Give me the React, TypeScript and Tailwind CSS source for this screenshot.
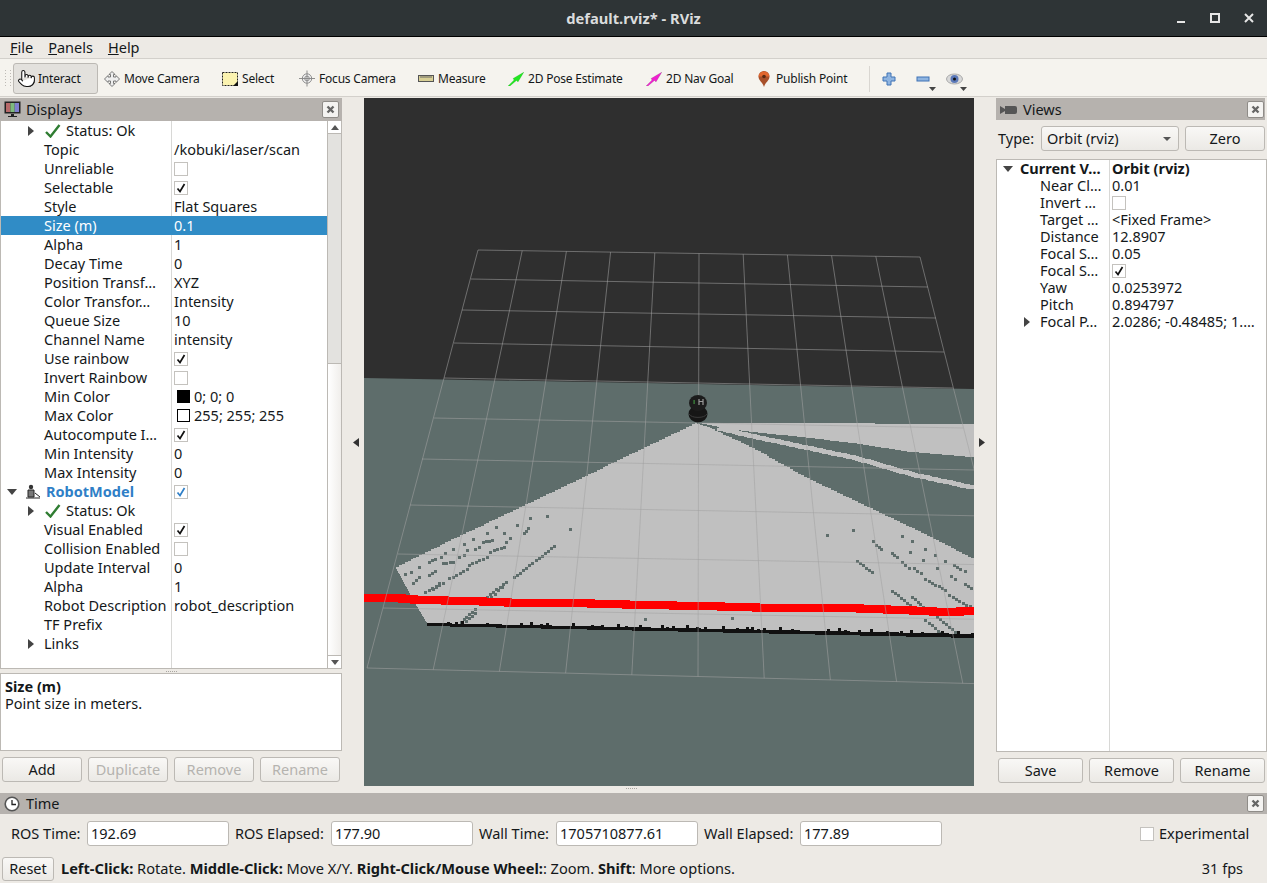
import React from "react";
import { Pointer } from "lucide-react";

const caretRight = (
  <svg width="6" height="10" viewBox="0 0 6 10">
    <path d="M0 0 L6 5 L0 10 Z" fill="#444" />
  </svg>
);
const caretDown = (
  <svg width="10" height="6" viewBox="0 0 10 6">
    <path d="M0 0 L10 0 L5 6 Z" fill="#444" />
  </svg>
);

const GreenCheck = () => (
  <svg width="16" height="14" viewBox="0 0 16 14">
    <path d="M1 8 L5.5 12.5 L14.5 1" fill="none" stroke="#2f7d32" strokeWidth="2.4" />
  </svg>
);

const Check = ({ on, blue }: { on?: boolean; blue?: boolean }) => (
  <span className="flex h-[14px] w-[14px] items-center justify-center border border-[#c4c2be] bg-white">
    {on && (
      <svg width="10" height="10" viewBox="0 0 10 10">
        <path d="M1.5 5.5 L4 8.5 L8.5 1" fill="none" stroke={blue ? "#2f7fc7" : "#111"} strokeWidth="1.7" />
      </svg>
    )}
  </span>
);

const CloseBtn = () => (
  <span className="flex h-[17px] w-[17px] items-center justify-center rounded-[2px] border border-[#8f8c88] bg-[#f4f3f1]">
    <svg width="9" height="9" viewBox="0 0 9 9">
      <path d="M1.5 1.5 L7.5 7.5 M7.5 1.5 L1.5 7.5" stroke="#666" strokeWidth="2.4" />
    </svg>
  </span>
);

const Btn = ({ children, disabled, className }: { children: React.ReactNode; disabled?: boolean; className: string }) => (
  <button
    className={`flex items-center justify-center rounded-[3px] border border-[#bcb9b4] bg-gradient-to-b from-[#f9f8f6] to-[#ebe9e5] ${
      disabled ? "text-[#b5b3af]" : "text-[#14181a]"
    } ${className}`}
  >
    {children}
  </button>
);

type Row = {
  name: React.ReactNode;
  value?: React.ReactNode;
  caret?: boolean;
  ok?: boolean;
};

const ROS_ROWS: Row[] = [
  { name: "Status: Ok", caret: true, ok: true },
  { name: "Topic", value: "/kobuki/laser/scan" },
  { name: "Unreliable", value: <Check /> },
  { name: "Selectable", value: <Check on /> },
  { name: "Style", value: "Flat Squares" },
];
const AFTER_ROWS: Row[] = [
  { name: "Alpha", value: "1" },
  { name: "Decay Time", value: "0" },
  { name: "Position Transf…", value: "XYZ" },
  { name: "Color Transfor…", value: "Intensity" },
  { name: "Queue Size", value: "10" },
  { name: "Channel Name", value: "intensity" },
  { name: "Use rainbow", value: <Check on /> },
  { name: "Invert Rainbow", value: <Check /> },
  {
    name: "Min Color",
    value: (
      <span className="flex items-center gap-[4px] pl-[3px]">
        <span className="h-[13px] w-[13px] bg-black" />
        0; 0; 0
      </span>
    ),
  },
  {
    name: "Max Color",
    value: (
      <span className="flex items-center gap-[4px] pl-[3px]">
        <span className="h-[13px] w-[13px] border border-black bg-white" />
        255; 255; 255
      </span>
    ),
  },
  { name: "Autocompute I…", value: <Check on /> },
  { name: "Min Intensity", value: "0" },
  { name: "Max Intensity", value: "0" },
];
const ROBOT_ROWS: Row[] = [
  { name: "Status: Ok", caret: true, ok: true },
  { name: "Visual Enabled", value: <Check on /> },
  { name: "Collision Enabled", value: <Check /> },
  { name: "Update Interval", value: "0" },
  { name: "Alpha", value: "1" },
  { name: "Robot Description", value: "robot_description" },
  { name: "TF Prefix" },
  { name: "Links", caret: true },
];

const DisplayRow = ({ row }: { row: Row }) => (
  <div className="flex h-[19px] items-center">
    <div className="flex h-full w-[171px] items-center whitespace-nowrap border-r border-[#d8d8d6]">
      <span className="flex w-[33px] justify-end pr-[0px]">{row.caret && caretRight}</span>
      <span className={row.ok ? "ml-[11px] flex items-center gap-[5px]" : "ml-[10px]"}>
        {row.ok && <GreenCheck />}
        {row.name}
      </span>
    </div>
    <div className="whitespace-nowrap pl-[2px]">{row.value}</div>
  </div>
);

const VIEW_ROWS: [string, React.ReactNode, boolean?][] = [
  ["Near Cl…", "0.01"],
  ["Invert …", <Check />],
  ["Target …", "<Fixed Frame>"],
  ["Distance", "12.8907"],
  ["Focal S…", "0.05"],
  ["Focal S…", <Check on />],
  ["Yaw", "0.0253972"],
  ["Pitch", "0.894797"],
  ["Focal P…", "2.0286; -0.48485; 1.…", true],
];

const TB_ITEMS = [
  { label: "Move Camera", width: "w-[118px]", slot: "mr-[4px] w-[16px]", icon: <MoveIcon /> },
  { label: "Select", width: "w-[77px]", slot: "mr-[4px] w-[16px]", icon: <SelectIcon /> },
  { label: "Focus Camera", width: "w-[119px]", slot: "mr-[4px] w-[16px]", icon: <FocusIcon /> },
  { label: "Measure", width: "w-[90px]", slot: "mr-[4px] w-[16px]", icon: <RulerIcon /> },
  { label: "2D Pose Estimate", width: "w-[138px]", slot: "mr-[4px] w-[16px]", icon: <ArrowIcon color="#22e622" /> },
  { label: "2D Nav Goal", width: "w-[112px]", slot: "mr-[4px] w-[16px]", icon: <ArrowIcon color="#f01fd0" /> },
  { label: "Publish Point", width: "w-[111px]", slot: "mr-[6px] w-[12px]", icon: <PinIcon /> },
];

function MoveIcon() {
  return (
    <svg width="16" height="16" viewBox="0 0 16 16" fill="#eee" stroke="#777" strokeWidth="1">
      <path d="M8 .5 L11 3.5 H9.5 V6 H12 V4.5 L15.5 8 L12 11.5 V10 H9.5 V12.5 H11 L8 15.5 L5 12.5 H6.5 V10 H4 V11.5 L.5 8 L4 4.5 V6 H6.5 V3.5 H5 Z" />
    </svg>
  );
}
function SelectIcon() {
  return (
    <svg width="16" height="16" viewBox="0 0 16 16">
      <rect x="0.5" y="1.5" width="15" height="13" fill="#fbf3b0" stroke="#222" strokeDasharray="2 1" />
      <path d="M11 15 L16 15 L16 10 Z" fill="#111" />
    </svg>
  );
}
function FocusIcon() {
  return (
    <svg width="17" height="17" viewBox="0 0 17 17" fill="none" stroke="#888">
      <circle cx="8.5" cy="8.5" r="5" fill="#eee" />
      <circle cx="8.5" cy="8.5" r="2.5" />
      <path d="M8.5 0 V17 M0 8.5 H17" />
    </svg>
  );
}
function RulerIcon() {
  return (
    <svg width="16" height="8" viewBox="0 0 16 8">
      <rect x="0.5" y="0.5" width="15" height="6" fill="#d8cf95" stroke="#555" />
      <path d="M3 1 V3 M5 1 V3 M7 1 V3 M9 1 V3 M11 1 V3 M13 1 V3" stroke="#666" />
    </svg>
  );
}
function ArrowIcon({ color }: { color: string }) {
  return (
    <svg width="16" height="14" viewBox="0 0 16 14">
      <path d="M0 14 L6 8 L5 6.5 L16 0 L10 10 L8.5 8.5 L2 14 Z" fill={color} stroke="#1a6a1a" strokeOpacity="0.25" strokeWidth="0.5" />
    </svg>
  );
}
function PinIcon() {
  return (
    <svg width="12" height="16" viewBox="0 0 12 16">
      <path d="M6 16 C4.5 11 .5 9.5 .5 5.5 A5.5 5.5 0 0 1 11.5 5.5 C11.5 9.5 7.5 11 6 16 Z" fill="#a8502a" />
      <path d="M6 .5 A5.5 5.5 0 0 1 11.5 5.5 L.5 5.5 A5.5 5.5 0 0 1 6 .5 Z" fill="#e2672e" />
      <circle cx="6" cy="5.5" r="1.8" fill="#5a2a12" />
    </svg>
  );
}

// grid corners read off the picture, one entry per horizontal line
const GRID_L = [[478, 250], [471, 279], [462, 310], [454, 343], [444, 378], [434, 418], [422, 459], [410, 505], [398, 554], [383, 608], [367, 668]];
const GRID_R = [[920, 257], [928, 287], [936, 318], [944, 352], [953, 388], [963, 428], [974, 470], [985, 516], [998, 565], [1013, 620], [1029, 685]];

const stairs = (pts: number[][], step = 3) => {
  const out: number[][] = [];
  for (let i = 0; i < pts.length - 1; i++) {
    const [ax, ay] = pts[i];
    const [bx, by] = pts[i + 1];
    const n = Math.max(1, Math.ceil(Math.abs(bx - ax) / step));
    for (let k = 0; k < n; k++) {
      out.push([Math.round(ax + ((bx - ax) * (k + 1)) / n), Math.round(ay + ((by - ay) * k) / n)]);
      out.push([Math.round(ax + ((bx - ax) * (k + 1)) / n), Math.round(ay + ((by - ay) * (k + 1)) / n)]);
    }
  }
  return out;
};
const toPts = (p: number[][]) => p.map((q) => q.join(",")).join(" ");

// crop coordinates of the zoomed map, converted to page pixels
const zx = (x: number) => 360 + x / 2.529;
const zy = (y: number) => 500 + y / 3;

const DOT_RUNS = [
  [390, 232, 490, 138], [320, 290, 370, 245], [332, 290, 358, 262], [255, 365, 290, 328], [268, 362, 292, 340], [165, 275, 210, 250], [185, 268, 200, 250], [225, 235, 270, 208],
  [275, 195, 320, 172], [175, 225, 190, 212], [135, 250, 150, 232], [115, 222, 128, 215], [175, 185, 190, 177],
  [205, 170, 215, 160], [310, 125, 335, 120], [425, 85, 415, 100], [380, 115, 370, 125], [365, 140, 330, 155],
  [290, 148, 300, 142], [250, 170, 262, 165], [210, 190, 235, 185],
  [1305, 135, 1318, 147], [1345, 160, 1358, 170], [1370, 185, 1388, 205], [1400, 205, 1418, 220], [1503, 195, 1518, 208],
  [1495, 228, 1505, 236], [1530, 252, 1545, 265], [1258, 183, 1295, 216], [1430, 238, 1480, 270], [1345, 272, 1390, 315],
  [1395, 290, 1425, 320], [1490, 285, 1550, 325], [1430, 360, 1470, 400], [1460, 350, 1505, 395],
];
const DOTS = [
  [235, 148], [262, 132], [285, 118], [320, 98], [345, 82], [365, 98], [398, 76], [430, 55], [474, 48], [270, 150], [150, 200], [530, 88],
  [1182, 104], [1248, 91], [1297, 123], [1370, 108], [1395, 124], [1428, 148], [1392, 155], [1425, 180], [1453, 165], [1480, 182], [1460, 203], [1530, 213], [720, 358], [942, 355],
];
const TICKS = [220, 240, 255, 318, 405, 430, 455, 470, 535, 585, 610, 650, 670, 705, 760, 775, 790, 825, 850, 870, 915, 950, 975, 990, 1005, 1020, 1060, 1090, 1180, 1210, 1225, 1260, 1290, 1330, 1365, 1390, 1420, 1470, 1510, 1545];

// a run of map cells along a line, about one cell every 4px
const runCells = ([a, b, c, d]: number[]) => {
  const [x1, y1, x2, y2] = [zx(a), zy(b), zx(c), zy(d)];
  const n = Math.max(1, Math.round(Math.hypot(x2 - x1, y2 - y1) / 4));
  return Array.from({ length: n + 1 }, (_, i) => [Math.round(x1 + ((x2 - x1) * i) / n), Math.round(y1 + ((y2 - y1) * i) / n)]);
};

const Scene = () => {
  const map = [
    ...stairs([[698, 423], [510, 513], [457, 538], [396, 568]]),
    [415, 603],
    [427, 623],
    [974, 636],
    [974, 558],
    ...stairs([[974, 558], [933, 537], [870, 507], [807, 477], [755, 448], [712, 428]]),
  ];
  const wedge = [
    [700, 423],
    [775, 423],
    [974, 424],
    [974, 457],
    ...stairs([[974, 457], [913, 452], [854, 443], [803, 437], [755, 432], [724, 428]]),
  ];
  const stripe = stairs([[716, 428], [755, 437], [854, 458], [913, 475], [974, 488]]);
  const red = [
    [364, 598],
    ...stairs(
      [[364, 598], [390, 598], [420, 600], [470, 601], [520, 603], [570, 603], [640, 605], [700, 606], [770, 608], [840, 608], [900, 610], [940, 612], [974, 611]],
      7
    ),
  ];
  return (
    <svg width="610" height="688" viewBox="364 98 610 688" className="block shrink-0">
      <rect x="364" y="98" width="610" height="688" fill="#2f2f2f" />
      <polygon points="364,378 974,389 974,786 364,786" fill="#5e6d6b" />
      <g shapeRendering="crispEdges">
        <polygon points={toPts(map)} fill="#c0c0c0" />
        <polygon points={toPts(wedge)} fill="#c0c0c0" />
        <polyline points={toPts(stripe)} fill="none" stroke="#c0c0c0" strokeWidth="3.5" />
        {DOT_RUNS.flatMap(runCells).map(([x, y], i) => (
          <rect key={i} x={x - 1} y={y - 1} width="3" height="3" fill="#5e6d6b" />
        ))}
        {DOTS.map(([a, b], i) => (
          <rect key={i} x={Math.round(zx(a)) - 1} y={Math.round(zy(b)) - 1} width="3" height="3" fill="#5e6d6b" />
        ))}
        <polygon points="427,623 974,634 974,638 427,626" fill="#111" />
        {TICKS.map((t, i) => (
          <rect key={i} x={Math.round(zx(t))} y={Math.round(623 + (zx(t) - 427) * 0.0201) - 1 - (i % 3)} width="3" height="4" fill="#111" />
        ))}
      </g>
      <polyline points={toPts(red)} fill="none" stroke="#ff0000" strokeWidth="8" shapeRendering="crispEdges" />
      <g stroke="#a3a3a3" strokeOpacity="0.55" strokeWidth="1" fill="none">
        {GRID_L.map((l, i) => (
          <line key={i} x1={l[0]} y1={l[1]} x2={GRID_R[i][0]} y2={GRID_R[i][1]} />
        ))}
        {Array.from({ length: 11 }).map((_, i) => {
          const f = i / 10;
          return (
            <line
              key={i}
              x1={478 + (920 - 478) * f}
              y1={250 + 7 * f}
              x2={367 + (1029 - 367) * f}
              y2={668 + 17 * f}
            />
          );
        })}
      </g>
      <ellipse cx="698" cy="414" rx="9.5" ry="8.5" fill="#161616" />
      <path d="M689 414 A9.5 5 0 0 0 707 414" fill="none" stroke="#3a3a3a" />
      <ellipse cx="698" cy="403" rx="9" ry="8" fill="#1c1c1c" />
      <rect x="693.5" y="400" width="1.2" height="4" fill="#3f8f3f" />
      <path d="M699 399 V405 M703 399 V405 M699 401.5 H703" stroke="#9a9a9a" strokeWidth="1.2" fill="none" />
    </svg>
  );
};

const TimeField = ({ label, value, labelW }: { label: string; value: string; labelW: string }) => (
  <>
    <span className={`${labelW} whitespace-nowrap`}>{label}</span>
    <span className="flex h-[25px] w-[142px] items-center rounded-[3px] border border-[#bcb9b4] bg-white pl-[3px]">{value}</span>
  </>
);

export default function App() {
  return (
    <div className="flex h-[883px] w-[1267px] flex-col overflow-hidden bg-[#edeae5] font-['Noto_Sans',sans-serif] text-[14.5px] leading-none text-[#14181a]">
      {/* title bar */}
      <div className="relative flex h-[37px] shrink-0 items-center justify-center border-b border-black bg-[#2e3436] text-[14.7px] font-bold text-[#dadcdd]">
        default.rviz* - RViz
        <div className="absolute right-[13px] top-0 flex h-full items-center gap-[24px]">
          <svg width="10" height="10" viewBox="0 0 10 10">
            <rect x="1" y="8" width="8" height="2" fill="#e6e6e6" />
          </svg>
          <svg width="10" height="10" viewBox="0 0 10 10">
            <rect x="1" y="1" width="8" height="8" fill="none" stroke="#e6e6e6" strokeWidth="2" />
          </svg>
          <svg width="10" height="10" viewBox="0 0 10 10">
            <path d="M1 1 L9 9 M9 1 L1 9" stroke="#e6e6e6" strokeWidth="2" />
          </svg>
        </div>
      </div>
      {/* menu */}
      <div className="flex h-[21px] shrink-0 items-center gap-[15px] pl-[10px] text-[14.5px]">
        <span><span className="underline">F</span>ile</span>
        <span><span className="underline">P</span>anels</span>
        <span><span className="underline">H</span>elp</span>
      </div>
      {/* toolbar */}
      <div className="flex h-[39px] shrink-0 items-center border-y border-[#d3d0cb] bg-[#f5f3ee] pl-[5px] pt-[2px] text-[12px] tracking-[-0.2px]">
        <span className="grid h-[18px] w-[8px] grid-cols-2 gap-[1px]">
          {Array.from({ length: 12 }).map((_, i) => (
            <span key={i} className="h-[1px] w-[1px] bg-[#bdbab5]" />
          ))}
        </span>
        <div className="flex h-[31px] w-[85px] items-center gap-[2px] rounded-[3px] border border-[#bcb9b4] bg-[#e3e1dd] pl-[3px]">
          <Pointer size={19} strokeWidth={1.3} fill="#fff" color="#111" />
          Interact
        </div>
        {TB_ITEMS.map((it) => (
          <div key={it.label} className={`flex items-center whitespace-nowrap pl-[6px] ${it.width}`}>
            <span className={`flex justify-center ${it.slot}`}>{it.icon}</span>
            {it.label}
          </div>
        ))}
        <span className="ml-[6px] h-[26px] w-[1px] bg-[#d9d6d1]" />
        <svg className="ml-[12px]" width="14" height="14" viewBox="0 0 14 14">
          <path d="M5 1 H9 V5 H13 V9 H9 V13 H5 V9 H1 V5 H5 Z" fill="#8fb4e0" stroke="#3f72b5" />
        </svg>
        <span className="relative ml-[20px] h-[14px] w-[14px]">
          <svg width="14" height="14" viewBox="0 0 14 14">
            <rect x="1" y="5" width="12" height="4" fill="#8fb4e0" stroke="#3f72b5" />
          </svg>
          <svg className="absolute left-[13px] top-[15px]" width="7" height="4" viewBox="0 0 7 4">
            <path d="M0 0 H7 L3.5 4 Z" fill="#444" />
          </svg>
        </span>
        <span className="relative ml-[16px] h-[14px] w-[16px]">
          <svg width="17" height="14" viewBox="0 0 17 14">
            <ellipse cx="8.5" cy="7" rx="8" ry="5" fill="#d8d8d8" stroke="#aaa" />
            <circle cx="8.5" cy="7" r="4" fill="#5b78b8" />
            <circle cx="8.5" cy="7" r="1.5" fill="#111" />
          </svg>
          <svg className="absolute left-[14px] top-[15px]" width="7" height="4" viewBox="0 0 7 4">
            <path d="M0 0 H7 L3.5 4 Z" fill="#444" />
          </svg>
        </span>
      </div>

      {/* main area */}
      <div className="flex h-[696px] shrink-0">
        {/* Displays */}
        <div className="flex w-[342px] shrink-0 flex-col pt-[1px]">
          <div className="flex h-[23px] items-center justify-between bg-[#b6b2ae] pl-[4px] pr-[3px]">
            <span className="flex items-center gap-[5px]">
              <svg width="17" height="17" viewBox="0 0 17 17">
                <rect x="0.5" y="0.5" width="16" height="12" fill="#222" />
                <rect x="2" y="2" width="4.4" height="9" fill="#b86a6a" />
                <rect x="6.4" y="2" width="4.3" height="9" fill="#7dba7d" />
                <rect x="10.7" y="2" width="4.3" height="9" fill="#7f7fd0" />
                <path d="M7 13 H10 V15 H13 V16 H4 V15 H7 Z" fill="#222" />
              </svg>
              Displays
            </span>
            <CloseBtn />
          </div>
          <div className="flex h-[548px] border-x border-b border-[#bcb9b4] bg-white">
            <div className="flex w-[326px] flex-col">
              {ROS_ROWS.map((r, i) => (
                <DisplayRow key={i} row={r} />
              ))}
              <div className="flex h-[19px] items-center bg-[#308cc6] text-white">
                <span className="w-[171px] pl-[43px]">Size (m)</span>
                <span className="pl-[2px]">0.1</span>
              </div>
              {AFTER_ROWS.map((r, i) => (
                <DisplayRow key={i} row={r} />
              ))}
              <div className="flex h-[19px] items-center">
                <div className="flex h-full w-[171px] items-center border-r border-[#d8d8d6] pl-[6px]">
                  {caretDown}
                  <svg className="ml-[8px]" width="16" height="16" viewBox="0 0 16 16">
                    <circle cx="6" cy="3" r="2.2" fill="#333" />
                    <path d="M3 6 H9 V13 H3 Z M10 9 L15 13 M1 14 H15" fill="#777" stroke="#222" />
                  </svg>
                  <span className="ml-[5px] font-bold text-[#2f7fc7]">RobotModel</span>
                </div>
                <div className="pl-[2px]">
                  <Check on blue />
                </div>
              </div>
              {ROBOT_ROWS.map((r, i) => (
                <DisplayRow key={i} row={r} />
              ))}
              <div className="w-[171px] flex-1 border-r border-[#d8d8d6]" />
            </div>
            <div className="flex w-[14px] flex-col border-l border-[#bcb9b4]">
              <div className="flex h-[13px] items-center justify-center border-b border-[#bcb9b4] bg-white">
                <svg width="8" height="5" viewBox="0 0 8 5"><path d="M0 5 L8 5 L4 0 Z" fill="#555" /></svg>
              </div>
              <div className="h-[229px] bg-[#e3e2df]" />
              <div className="flex-1 border-t border-[#bcb9b4] bg-gradient-to-r from-white to-[#f0eeeb]" />
              <div className="flex h-[13px] items-center justify-center border-t border-[#bcb9b4] bg-white">
                <svg width="8" height="5" viewBox="0 0 8 5"><path d="M0 0 L8 0 L4 5 Z" fill="#555" /></svg>
              </div>
            </div>
          </div>
          <div className="flex h-[4px] items-center justify-center gap-[1px]">
            {Array.from({ length: 6 }).map((_, i) => (
              <span key={i} className="h-[1px] w-[1px] bg-[#a9a6a1]" />
            ))}
          </div>
          <div className="h-[78px] border border-[#bcb9b4] bg-white pl-[4px] pt-[4px] leading-[17px]">
            <div className="font-bold">Size (m)</div>
            <div>Point size in meters.</div>
          </div>
          <div className="mt-[6px] flex gap-[6px] pl-[2px]">
            <Btn className="h-[25px] w-[80px]">Add</Btn>
            <Btn disabled className="h-[25px] w-[80px]">Duplicate</Btn>
            <Btn disabled className="h-[25px] w-[80px]">Remove</Btn>
            <Btn disabled className="h-[25px] w-[80px]">Rename</Btn>
          </div>
        </div>

        {/* 3D view */}
        <div className="flex w-[654px] shrink-0 flex-col pt-[1px]">
          <div className="flex h-[688px]">
            <div className="flex w-[22px] items-center justify-end pr-[5px]">
              <svg width="6" height="9" viewBox="0 0 6 9"><path d="M6 0 L0 4.5 L6 9 Z" fill="#333" /></svg>
            </div>
            <Scene />
            <div className="flex w-[22px] items-center pl-[5px]">
              <svg width="6" height="9" viewBox="0 0 6 9"><path d="M0 0 L6 4.5 L0 9 Z" fill="#333" /></svg>
            </div>
          </div>
          <div className="flex h-[5px] items-center justify-center gap-[1px] pr-[76px]">
            {Array.from({ length: 6 }).map((_, i) => (
              <span key={i} className="h-[1px] w-[1px] bg-[#a9a6a1]" />
            ))}
          </div>
        </div>

        {/* Views */}
        <div className="flex w-[271px] shrink-0 flex-col pt-[1px]">
          <div className="mr-[2px] flex h-[22px] items-center justify-between bg-[#b6b2ae] pl-[4px] pr-[1px] pt-[1px]">
            <span className="flex items-center gap-[6px]">
              <svg width="17" height="10" viewBox="0 0 17 10">
                <path d="M0 1 L5 4 V1 H15 A2 2 0 0 1 17 3 V7 A2 2 0 0 1 15 9 H5 V6 L0 9 Z" fill="#555" />
              </svg>
              Views
            </span>
            <CloseBtn />
          </div>
          <div className="mt-[6px] flex h-[25px] items-center pl-[2px]">
            <span className="w-[43px]">Type:</span>
            <div className="flex h-[25px] w-[138px] items-center justify-between rounded-[3px] border border-[#bcb9b4] bg-gradient-to-b from-[#f9f8f6] to-[#ebe9e5] pl-[5px] pr-[7px]">
              Orbit (rviz)
              <svg width="8" height="4" viewBox="0 0 8 4"><path d="M0 0 H8 L4 4 Z" fill="#555" /></svg>
            </div>
            <Btn className="ml-[6px] h-[25px] w-[80px]">Zero</Btn>
          </div>
          <div className="mt-[8px] flex h-[593px] flex-col border border-[#bcb9b4] bg-white">
            <div className="flex h-[17px] items-center font-bold">
              <div className="flex h-full w-[113px] items-center whitespace-nowrap border-r border-[#d8d8d6] pl-[6px]">
                {caretDown}
                <span className="ml-[7px]">Current V…</span>
              </div>
              <span className="pl-[2px]">Orbit (rviz)</span>
            </div>
            {VIEW_ROWS.map(([name, value, caret], i) => (
              <div key={i} className="flex h-[17px] items-center">
                <div className="flex h-full w-[113px] items-center whitespace-nowrap border-r border-[#d8d8d6]">
                  <span className="flex w-[33px] justify-end">{caret && caretRight}</span>
                  <span className="ml-[10px]">{name}</span>
                </div>
                <span className="whitespace-nowrap pl-[2px]">{value}</span>
              </div>
            ))}
            <div className="w-[113px] flex-1 border-r border-[#d8d8d6]" />
          </div>
          <div className="mt-[6px] flex gap-[6px] pl-[2px]">
            <Btn className="h-[25px] w-[85px]">Save</Btn>
            <Btn className="h-[25px] w-[85px]">Remove</Btn>
            <Btn className="h-[25px] w-[85px]">Rename</Btn>
          </div>
        </div>
      </div>

      {/* Time panel */}
      <div className="flex h-[21px] shrink-0 items-center justify-between bg-[#b6b2ae] pl-[4px] pr-[3px]">
        <span className="flex items-center gap-[6px]">
          <svg width="16" height="16" viewBox="0 0 16 16">
            <circle cx="8" cy="8" r="6.8" fill="#fff" stroke="#555" strokeWidth="1.6" />
            <path d="M8 4 V8.5 H12" fill="none" stroke="#222" strokeWidth="1.3" />
          </svg>
          Time
        </span>
        <CloseBtn />
      </div>
      <div className="mt-[7px] flex h-[25px] shrink-0 items-center pl-[11px]">
        <TimeField label="ROS Time:" value="192.69" labelW="w-[76px]" />
        <span className="w-[6px]" />
        <TimeField label="ROS Elapsed:" value="177.90" labelW="w-[96px]" />
        <span className="w-[6px]" />
        <TimeField label="Wall Time:" value="1705710877.61" labelW="w-[77px]" />
        <span className="w-[6px]" />
        <TimeField label="Wall Elapsed:" value="177.89" labelW="w-[96px]" />
        <span className="ml-[198px]">
          <Check />
        </span>
        <span className="ml-[5px]">Experimental</span>
      </div>
      <div className="mt-[10px] flex h-[25px] shrink-0 items-center pl-[2px] pr-[24px]">
        <Btn className="h-[24px] w-[52px]">Reset</Btn>
        <span className="ml-[7px] whitespace-nowrap text-[14.6px]">
          <b>Left-Click:</b> Rotate. <b>Middle-Click:</b> Move X/Y. <b>Right-Click/Mouse Wheel:</b>: Zoom. <b>Shift</b>: More options.
        </span>
        <span className="ml-auto">31 fps</span>
      </div>
    </div>
  );
}
